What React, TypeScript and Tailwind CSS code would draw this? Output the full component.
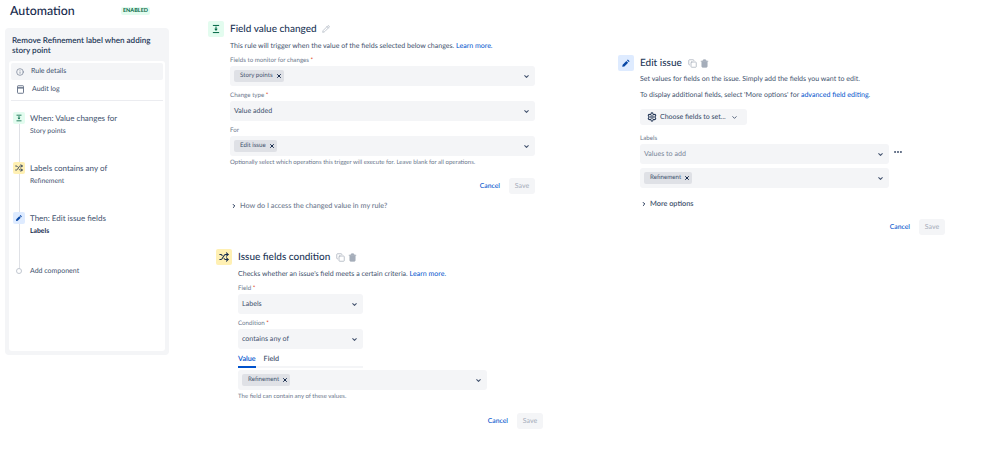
import React from "react";
import { ChevronDown, ChevronRight, Copy, Info, MoreHorizontal, Pencil, Settings, Shuffle, Trash2, X } from "lucide-react";

const FieldIcon = ({ className }: { className: string }) => (
  <svg viewBox="0 0 16 16" className={className} fill="currentColor">
    <rect x="3" y="1.5" width="10" height="1.6" />
    <rect x="3" y="12.9" width="10" height="1.6" />
    <path d="M7.2 4h1.6v3.5h2L8 11 5.2 7.5h2z" />
  </svg>
);

const PencilFill = ({ className }: { className: string }) => (
  <svg viewBox="0 0 16 16" className={className} fill="currentColor">
    <path d="M11 2.2l2.8 2.8-1.5 1.5-2.8-2.8zM8.6 4.6l2.8 2.8-6 6-3.4.6.6-3.4z" />
  </svg>
);

const AuditIcon = () => (
  <svg viewBox="0 0 12 12" className="h-[9px] w-[9px] text-[#6b778c]" fill="none" stroke="currentColor" strokeWidth="1.3">
    <rect x="2" y="1" width="8" height="10" rx="0.8" />
    <path d="M2.5 3.8h7" strokeWidth="2" />
  </svg>
);

const Label = ({ text, required }: { text: string; required?: boolean }) => (
  <div className="h-[10px] pt-[1px] text-[6.2px] leading-[10px] text-[#6b778c]">
    {text}
    {required && <span className="text-[#de350b]"> *</span>}
  </div>
);

const Tag = ({ text }: { text: string }) => (
  <span className="flex h-[12px] items-center gap-[3px] rounded-[2px] bg-[#dfe1e6] pl-[6px] pr-[2px] text-[6.2px] text-[#42526e]">
    {text}
    <X className="h-[6px] w-[6px] text-[#172b4d]" strokeWidth={4} />
  </span>
);

const SelectBox = ({ children, className }: { children: React.ReactNode; className: string }) => (
  <div className={`flex items-center justify-between rounded-[3px] bg-[#f4f5f7] pl-[4px] pr-[5px] text-[7.1px] text-[#42526e] ${className}`}>
    {children}
    <ChevronDown className="h-[7px] w-[7px] text-[#42526e]" strokeWidth={3.5} />
  </div>
);

const Actions = () => (
  <div className="flex items-center justify-end gap-[9px]">
    <span className="text-[6.8px] font-medium text-[#0052cc]">Cancel</span>
    <span className="flex h-[16px] w-[26px] items-center justify-center rounded-[3px] bg-[#f4f5f7] text-[7px] text-[#a5adba]">Save</span>
  </div>
);

const CardHead = ({ icon, title, tools, box }: { icon: React.ReactNode; title: string; tools: React.ReactNode; box: string }) => (
  <div className="flex h-[16px] items-center">
    <div className={`flex h-[16px] w-[16px] items-center justify-center rounded-[2px] ${box}`}>{icon}</div>
    <h2 className="ml-[6px] pt-[1px] text-[10px] font-medium text-[#253858]">{title}</h2>
    {tools}
  </div>
);

const CopyTrash = () => (
  <div className="ml-[6px] flex items-center gap-[3px] text-[#a5adba]">
    <Copy className="h-[9px] w-[9px]" />
    <Trash2 className="h-[9px] w-[9px]" fill="currentColor" strokeWidth={2} />
  </div>
);

const Step = ({ icon, box, title, sub, bold }: { icon: React.ReactNode; box: string; title: string; sub: string; bold?: boolean }) => (
  <div className="relative flex h-[50px] items-start">
    <div className={`z-10 flex h-[12px] w-[12px] items-center justify-center rounded-[2px] ${box}`}>{icon}</div>
    <div className="ml-[5px]">
      <div className="h-[12px] text-[8px] leading-[12px] text-[#42526e]">{title}</div>
      <div className={`mt-[2px] text-[6.8px] leading-[11px] ${bold ? "font-bold text-[#172b4d]" : "text-[#42526e]"}`}>{sub}</div>
    </div>
  </div>
);

export default function App() {
  return (
    <div className="flex h-[467px] w-[999px] overflow-hidden bg-white font-['Lato',sans-serif] antialiased [text-rendering:geometricPrecision]">
      <aside className="ml-[5px] w-[164px] shrink-0">
        <div className="flex h-[22px] items-center justify-between pl-[5px] pr-[19px]">
          <h1 className="text-[12.4px] font-medium text-[#172b4d]">Automation</h1>
          <span className="rounded-[2px] bg-[#e3fcef] px-[2px] text-[5.5px] font-bold leading-[8px] text-[#006644]">ENABLED</span>
        </div>
        <div className="mt-[6px] h-[327px] rounded-[4px] bg-[#f4f5f7] px-[4px] pb-[4px] pt-[7px]">
          <div className="px-[3px] text-[8.1px] font-semibold leading-[10px] text-[#253858]">Remove Refinement label when adding story point</div>
          <div className="mt-[6px] h-[290px] rounded-[3px] bg-white px-[2px] pt-[2px]">
            <div className="flex h-[17px] items-center gap-[7px] rounded-[2px] bg-[#f4f5f7] pl-[5px] text-[7px] text-[#42526e]">
              <Info className="h-[8px] w-[8px] text-[#6b778c]" />
              Rule details
            </div>
            <div className="flex h-[19px] items-center gap-[7px] pl-[5px] text-[7px] text-[#42526e]">
              <AuditIcon />
              Audit log
            </div>
            <div className="mt-[1px] h-px bg-[#ebecf0]" />
            <div className="relative mt-[11px] pl-[2px]">
              <div className="absolute bottom-[6px] left-[8px] top-0 w-[1px] bg-[#dfe1e6]" />
              <Step box="bg-[#e3fcef]" icon={<FieldIcon className="h-[8px] w-[8px] text-[#006644]" />} title="When: Value changes for" sub="Story points" />
              <Step box="bg-[#fff0b3]" icon={<Shuffle className="h-[8px] w-[8px] text-[#172b4d]" strokeWidth={2.5} />} title="Labels contains any of" sub="Refinement" />
              <Step box="bg-[#deebff]" icon={<PencilFill className="h-[8px] w-[8px] text-[#0747a6]" />} title="Then: Edit issue fields" sub="Labels" bold />
              <div className="relative mt-[3px] flex h-[12px] items-center">
                <span className="z-10 ml-[3px] h-[6px] w-[6px] rounded-full border border-[#c1c7d0] bg-white" />
                <span className="ml-[8px] text-[7px] text-[#42526e]">Add component</span>
              </div>
            </div>
          </div>
        </div>
      </aside>

      <main className="ml-[39px] w-[340px] shrink-0 pt-[21px]">
        <section>
          <CardHead
            box="bg-[#e3fcef]"
            icon={<FieldIcon className="h-[10px] w-[10px] text-[#006644]" />}
            title="Field value changed"
            tools={<Pencil className="ml-[5px] h-[8px] w-[8px] text-[#a5adba]" />}
          />
          <div className="ml-[22px] w-[305px]">
            <p className="mt-[4px] h-[10px] whitespace-nowrap text-[7.05px] leading-[10px] text-[#42526e]">
              This rule will trigger when the value of the fields selected below changes. <span className="text-[#0052cc]">Learn more.</span>
            </p>
            <div className="mt-[4px]"><Label text="Fields to monitor for changes" required /></div>
            <SelectBox className="mt-[1px] h-[20px]"><Tag text="Story points" /></SelectBox>
            <div className="mt-[4px]"><Label text="Change type" required /></div>
            <SelectBox className="mt-[1px] h-[20px]">Value added</SelectBox>
            <div className="mt-[4px]"><Label text="For" /></div>
            <SelectBox className="mt-[1px] h-[20px]"><Tag text="Edit issue" /></SelectBox>
            <p className="mt-[2px] h-[10px] text-[6.05px] leading-[10px] text-[#6b778c]">Optionally select which operations this trigger will execute for. Leave blank for all operations.</p>
            <div className="mt-[10px]"><Actions /></div>
            <div className="mt-[6px] flex h-[12px] items-center gap-[3px] pl-[1px] text-[7.25px] font-medium text-[#6b778c]">
              <ChevronRight className="h-[6px] w-[6px] text-[#172b4d]" strokeWidth={4} />
              How do I access the changed value in my rule?
            </div>
          </div>
        </section>

        <section className="ml-[8px] mt-[37px]">
          <CardHead
            box="bg-[#fff0b3]"
            icon={<Shuffle className="h-[10px] w-[10px] text-[#172b4d]" strokeWidth={2.5} />}
            title="Issue fields condition"
            tools={<CopyTrash />}
          />
          <div className="ml-[22px] w-[305px]">
            <p className="mt-[4px] h-[10px] whitespace-nowrap text-[7.05px] leading-[10px] text-[#42526e]">
              Checks whether an issue's field meets a certain criteria. <span className="text-[#0052cc]">Learn more.</span>
            </p>
            <div className="mt-[4px]"><Label text="Field" required /></div>
            <SelectBox className="mt-[1px] h-[20px] w-[125px]">Labels</SelectBox>
            <div className="mt-[4px]"><Label text="Condition" required /></div>
            <SelectBox className="mt-[1px] h-[20px] w-[125px]">contains any of</SelectBox>
            <div className="mt-[3px] flex h-[16px] w-[125px] gap-[8px] border-b-[2px] border-[#f4f5f7] pt-[1px] text-[7.2px] font-semibold leading-[12px]">
              <span className="-mb-[2px] h-[15px] border-b-[2px] border-[#0052cc] text-[#0052cc]">Value</span>
              <span className="text-[#42526e]">Field</span>
            </div>
            <SelectBox className="mt-[2px] h-[20px] w-[249px]"><Tag text="Refinement" /></SelectBox>
            <p className="mt-[2px] h-[10px] text-[6.05px] leading-[10px] text-[#6b778c]">The field can contain any of these values.</p>
            <div className="mt-[11px]"><Actions /></div>
          </div>
        </section>
      </main>

      <section className="ml-[70px] w-[327px] shrink-0 pt-[55px]">
        <CardHead
          box="bg-[#deebff]"
          icon={<PencilFill className="h-[10px] w-[10px] text-[#0747a6]" />}
          title="Edit issue"
          tools={<CopyTrash />}
        />
        <div className="ml-[22px] w-[305px]">
          <p className="mt-[3px] h-[10px] whitespace-nowrap text-[7.05px] leading-[10px] text-[#42526e]">Set values for fields on the issue. Simply add the fields you want to edit.</p>
          <p className="mt-[6px] h-[10px] whitespace-nowrap text-[7.05px] leading-[10px] text-[#42526e]">
            To display additional fields, select 'More options' for <span className="text-[#0052cc]">advanced field editing</span>.
          </p>
          <div className="mt-[9px] flex h-[16px] w-[107px] items-center gap-[3px] whitespace-nowrap rounded-[3px] bg-[#f4f5f7] pl-[7px] text-[7px] font-medium text-[#42526e]">
            <Settings className="h-[10px] w-[10px] text-[#253858]" strokeWidth={2.5} />
            Choose fields to set...
            <ChevronDown className="ml-[2px] h-[7px] w-[7px]" strokeWidth={3} />
          </div>
          <div className="mt-[8px]"><Label text="Labels" /></div>
          <div className="mt-[1px] flex items-start gap-[4px]">
            <SelectBox className="h-[20px] w-[249px]"><span className="text-[#7a869a]">Values to add</span></SelectBox>
            <MoreHorizontal className="mt-[3px] h-[10px] w-[10px] text-[#42526e]" strokeWidth={3} />
          </div>
          <SelectBox className="mt-[4px] h-[20px] w-[249px]"><Tag text="Refinement" /></SelectBox>
          <div className="mt-[10px] flex h-[12px] items-center gap-[3px] pl-[1px] text-[7.3px] font-semibold text-[#42526e]">
            <ChevronRight className="h-[6px] w-[6px] text-[#172b4d]" strokeWidth={4} />
            More options
          </div>
          <div className="mt-[9px]"><Actions /></div>
        </div>
      </section>
    </div>
  );
}
